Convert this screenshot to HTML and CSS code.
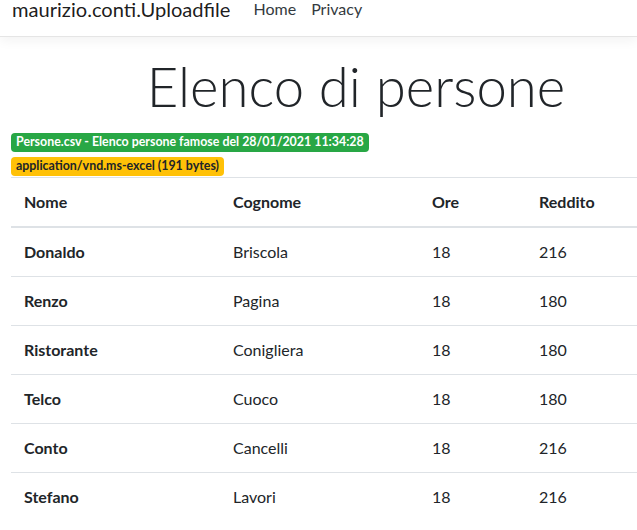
FILE: index.html
```html
<!DOCTYPE html>
<html lang="it">
<head>
<meta charset="utf-8">
<title>Elenco di persone - maurizio.conti.Uploadfile</title>
<link rel="stylesheet" href="styles.css">
</head>
<body>
<header class="navbar">
  <a class="brand" href="#">maurizio.conti.Uploadfile</a>
  <nav class="nav">
    <a class="nav-link" href="#">Home</a>
    <a class="nav-link" href="#">Privacy</a>
  </nav>
</header>
<main class="container">
  <h1 class="display">Elenco di persone</h1>
  <div class="badge-line"><span class="badge badge-success">Persone.csv - Elenco persone famose del 28/01/2021 11:34:28</span></div>
  <div class="badge-line"><span class="badge badge-warning">application/vnd.ms-excel (191 bytes)</span></div>
  <table class="table">
    <colgroup>
      <col class="c1"><col class="c2"><col class="c3"><col class="c4">
    </colgroup>
    <thead>
      <tr><th>Nome</th><th>Cognome</th><th>Ore</th><th>Reddito</th></tr>
    </thead>
    <tbody>
      <tr><th>Donaldo</th><td>Briscola</td><td>18</td><td>216</td></tr>
      <tr><th>Renzo</th><td>Pagina</td><td>18</td><td>180</td></tr>
      <tr><th>Ristorante</th><td>Conigliera</td><td>18</td><td>180</td></tr>
      <tr><th>Telco</th><td>Cuoco</td><td>18</td><td>180</td></tr>
      <tr><th>Conto</th><td>Cancelli</td><td>18</td><td>216</td></tr>
      <tr><th>Stefano</th><td>Lavori</td><td>18</td><td>216</td></tr>
    </tbody>
  </table>
</main>
</body>
</html>
```
FILE: styles.css
```css
html, body {
  margin: 0;
  padding: 0;
  overflow: hidden;
  background: #fff;
}
body {
  font-family: Lato, "Open Sans", sans-serif;
  font-size: 16px;
  line-height: 24px;
  color: #212529;
}
.navbar {
  display: flex;
  align-items: flex-start;
  height: 36px;
  padding: 0 11px 0 12px;
  border-bottom: 1px solid #e5e5e5;
  box-shadow: 0 4px 12px rgba(0, 0, 0, 0.05);
  background: #fff;
}
.brand {
  font-size: 20.1px;
  line-height: 18px;
  color: rgba(0, 0, 0, 0.9);
  text-decoration: none;
  margin-right: 15px;
  white-space: nowrap;
}
.nav {
  display: flex;
}
.nav-link {
  font-size: 16px;
  line-height: 18px;
  padding: 0 8px;
  color: #343a40;
  text-decoration: none;
}
.nav-link + .nav-link {
  margin-left: -1px;
}
.container {
  width: 690px;
  padding: 0 11px;
  margin-top: 16px;
}
.display {
  margin: 1px 0 8px;
  font-size: 54.5px;
  font-weight: 300;
  line-height: 67px;
  text-align: center;
}
.badge-line {
  line-height: 24px;
}
.badge {
  display: inline-block;
  font-size: 12.4px;
  font-weight: 700;
  line-height: 1;
  padding: 3.1px 5px;
  border-radius: 4px;
  white-space: nowrap;
}
.badge-success {
  background: #28a745;
  color: #fff;
}
.badge-warning {
  background: #ffc107;
  color: #212529;
}
.table {
  width: 690px;
  table-layout: fixed;
  border-collapse: collapse;
  margin: 1px 0 16px;
}
.c1 { width: 209px; }
.c2 { width: 199px; }
.c3 { width: 107px; }
.c4 { width: 175px; }
.table th,
.table td {
  padding: 12px 12px 12px 13px;
  text-align: left;
  vertical-align: top;
  border-top: 1px solid #dee2e6;
}
.table th {
  font-weight: 700;
}
.table thead th {
  vertical-align: bottom;
  border-bottom: 2px solid #dee2e6;
}
.table td {
  font-weight: 400;
}
```
